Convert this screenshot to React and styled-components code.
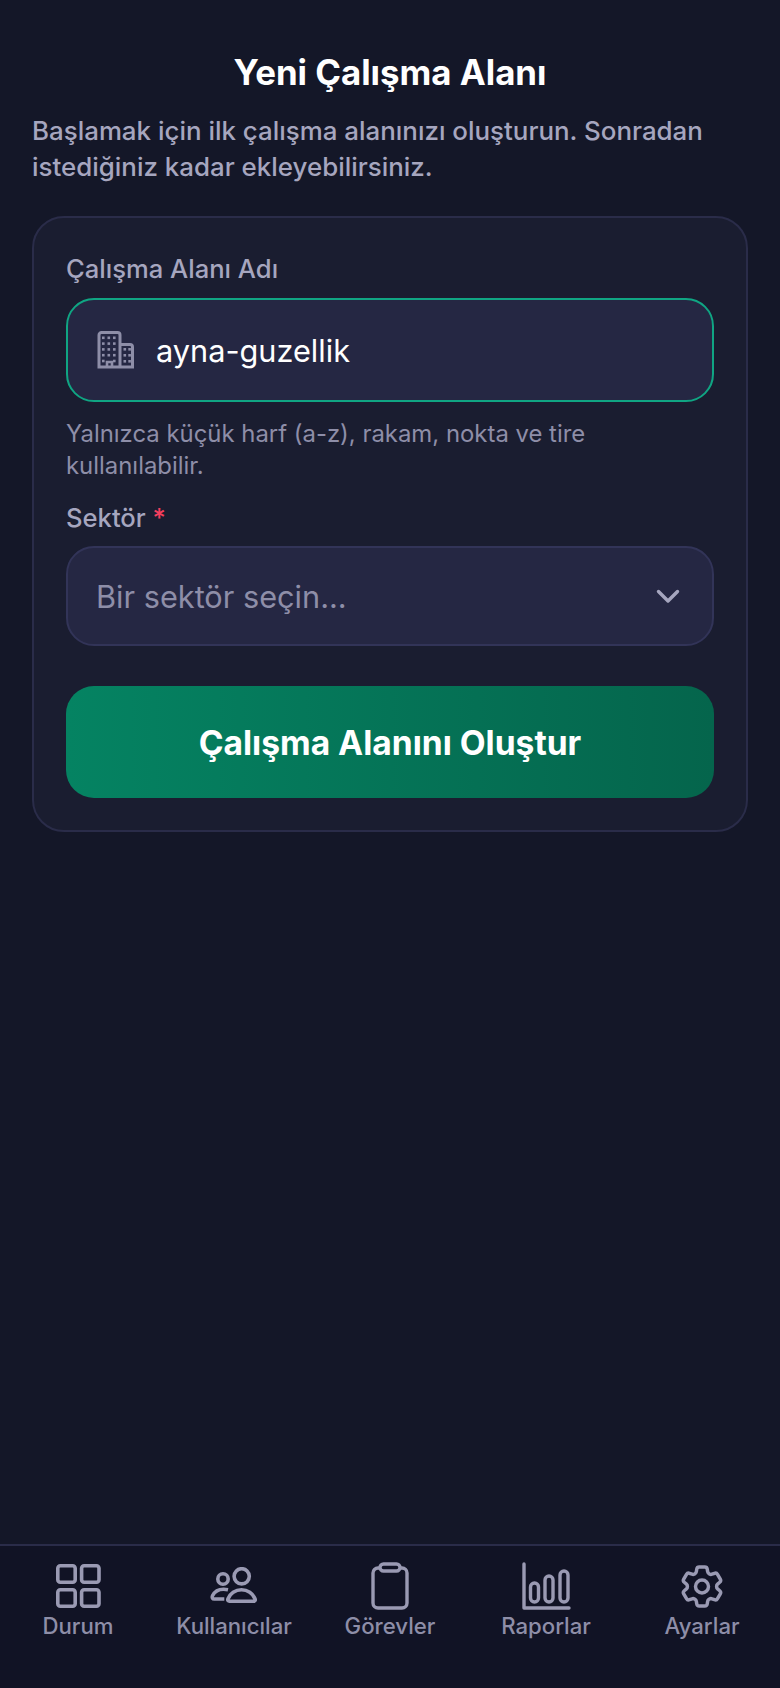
import styled, { createGlobalStyle } from "styled-components";
import { HiOutlineCog6Tooth } from "react-icons/hi2";

const GlobalStyle = createGlobalStyle`
	html, body {
		margin: 0;
		padding: 0;
		background: #141728;
	}
	* {
		box-sizing: border-box;
	}
`;

const Page = styled.div`
	width: 780px;
	height: 1688px;
	display: flex;
	flex-direction: column;
	background: #141728;
	font-family: Inter, "Noto Sans", sans-serif;
`;
const Main = styled.main`
	flex: 1;
	padding: 50px 32px 0;
`;
const Title = styled.h1`
	margin: 0 0 19px;
	font-size: 34.8px;
	line-height: 44px;
	font-weight: 700;
	color: #fff;
	text-align: center;
`;
const Intro = styled.p`
	margin: 0 0 31px;
	font-size: 25.9px;
	line-height: 36px;
	font-weight: 500;
	color: #a6a6bf;
`;
const Card = styled.form`
	height: 616px;
	padding: 33px 32px 0;
	background: #1a1d30;
	border: 2px solid #2a2c49;
	border-radius: 32px;
`;
const Label = styled.label`
	display: block;
	font-size: 25.6px;
	line-height: 36px;
	font-weight: 500;
	color: #a6a6bf;
`;
const SectorLabel = styled(Label)`
	margin-top: 18px;
`;
const Required = styled.span`
	color: #f43f5e;
`;
const InputBox = styled.div`
	height: 104px;
	margin-top: 11px;
	display: flex;
	align-items: center;
	gap: 22px;
	padding: 0 29px;
	background: #252743;
	border: 2px solid #10a583;
	border-radius: 28px;
`;
const InputValue = styled.span`
	font-size: 30.7px;
	color: #fff;
`;
const Hint = styled.p`
	margin: 16px 0 0;
	font-size: 23.9px;
	line-height: 32px;
	color: #8e8ea8;
`;
const SelectBox = styled.div`
	height: 100px;
	margin-top: 10px;
	display: flex;
	align-items: center;
	justify-content: space-between;
	padding: 0 32px 0 28px;
	background: #252743;
	border: 2px solid #323458;
	border-radius: 28px;
`;
const Placeholder = styled.span`
	font-size: 30.7px;
	color: #8e8ea8;
`;
const SubmitButton = styled.button`
	display: block;
	width: 100%;
	height: 112px;
	margin-top: 40px;
	border: none;
	border-radius: 28px;
	background: linear-gradient(90deg, #058362, #05654c);
	color: #fff;
	font-family: inherit;
	font-size: 33.6px;
	font-weight: 700;
`;
const BottomNav = styled.nav`
	height: 144px;
	padding-top: 16px;
	display: grid;
	grid-template-columns: repeat(5, 156px);
	background: #111325;
	border-top: 2px solid #2a2c49;
`;
const NavItem = styled.a`
	display: flex;
	flex-direction: column;
	align-items: center;
	gap: 2px;
	font-size: 22.2px;
	line-height: 28px;
	font-weight: 500;
	color: #8e8ea8;
`;
const NavIcon = styled.span`
	width: 52px;
	height: 48px;
	display: flex;
	align-items: center;
	justify-content: center;
	color: #9a9ab3;
`;
const BuildingSlot = styled.span`
	display: flex;
	color: #8e8ea8;
`;
const ChevronSlot = styled.span`
	display: flex;
	color: #a6a6bf;
`;

const DashboardIcon = () => (
	<svg width="45" height="44" viewBox="0 0 45 44" fill="none" stroke="currentColor" strokeWidth="3.6">
		<rect x="1.8" y="1.8" width="17.4" height="16.4" rx="2.5" />
		<rect x="25.6" y="1.8" width="17.4" height="16.4" rx="2.5" />
		<rect x="1.8" y="25.8" width="17.4" height="16.4" rx="2.5" />
		<rect x="25.6" y="25.8" width="17.4" height="16.4" rx="2.5" />
	</svg>
);
const UsersIcon = () => (
	<svg width="50" height="38" viewBox="0 0 50 38" fill="none" stroke="currentColor" strokeWidth="3.6">
		<circle cx="14" cy="12" r="5.2" />
		<circle cx="32.7" cy="9.3" r="7.6" />
		<path d="M19 22.8c-1.5-.3-3-.5-4.500-.5-4.500 0-9 2.500-11 6.500-.8 1.700 0 3.200 1.800 3.200h10" />
		<path d="M20.500 34.200c-1.500 0-2-1-1.600-2.200C21 26.500 26.500 22.800 32.500 22.800s11.500 3.700 13.600 9.200c.4 1.200-.1 2.200-1.600 2.200Z" />
	</svg>
);
const ClipboardIcon = () => (
	<svg width="38" height="48" viewBox="0 0 38 48" fill="none" stroke="currentColor" strokeWidth="3.4">
		<path d="M9 6H7a5 5 0 0 0-5 5v30a5 5 0 0 0 5 5h24a5 5 0 0 0 5-5V11a5 5 0 0 0-5-5h-2" />
		<rect x="9" y="2" width="20" height="7" rx="3.500" />
	</svg>
);
const ChartIcon = () => (
	<svg width="50" height="48" viewBox="0 0 50 48" fill="none" stroke="currentColor" strokeWidth="3.4">
		<path d="M3 2v44h45" strokeLinecap="round" strokeLinejoin="round" />
		<rect x="9.500" y="21" width="8" height="19" rx="4" />
		<rect x="24" y="14" width="8" height="26" rx="4" />
		<rect x="39" y="9" width="8" height="31" rx="4" />
	</svg>
);
const BuildingIcon = () => {
	const dots = [];
	for (let row = 0; row < 5; row++) {
		for (let col = 0; col < 3; col++) {
			if (row === 4 && col === 1) continue;
			dots.push(<rect key={`a${row}${col}`} x={5 + col * 5.5} y={5.5 + row * 5.8} width="2.6" height="2.6" />);
		}
	}
	for (let row = 0; row < 3; row++) {
		for (let col = 0; col < 2; col++) {
			dots.push(<rect key={`b${row}${col}`} x={26.5 + col * 4.8} y={17 + row * 6} width="2.6" height="2.6" />);
		}
	}
	return (
		<svg width="37" height="38" viewBox="0 0 37 38" fill="currentColor">
			<path
				d="M23 36V4a2.500 2.500 0 0 0-2.500-2.500h-16A2.500 2.500 0 0 0 2 4v32h33.500V16a2.500 2.500 0 0 0-2.500-2.500H23"
				fill="none"
				stroke="currentColor"
				strokeWidth="3"
			/>
			<path d="M10 36v-5h5v5" fill="none" stroke="currentColor" strokeWidth="2.600" />
			{dots}
		</svg>
	);
};
const ChevronIcon = () => (
	<svg width="24" height="15" viewBox="0 0 24 15" fill="none" stroke="currentColor" strokeWidth="3.4" strokeLinecap="round" strokeLinejoin="round">
		<path d="M2.500 2.500 12 12l9.500-9.500" />
	</svg>
);

const navItems = [
	{ label: "Durum", icon: <DashboardIcon /> },
	{ label: "Kullanıcılar", icon: <UsersIcon /> },
	{ label: "Görevler", icon: <ClipboardIcon /> },
	{ label: "Raporlar", icon: <ChartIcon /> },
	{ label: "Ayarlar", icon: <HiOutlineCog6Tooth size={53} strokeWidth={1.6} /> },
];

function App() {
	return (
		<>
			<GlobalStyle />
			<Page>
				<Main>
					<Title>Yeni Çalışma Alanı</Title>
					<Intro>Başlamak için ilk çalışma alanınızı oluşturun. Sonradan istediğiniz kadar ekleyebilirsiniz.</Intro>
					<Card onSubmit={e => e.preventDefault()}>
						<Label>Çalışma Alanı Adı</Label>
						<InputBox>
							<BuildingSlot>
								<BuildingIcon />
							</BuildingSlot>
							<InputValue>ayna-guzellik</InputValue>
						</InputBox>
						<Hint>Yalnızca küçük harf (a-z), rakam, nokta ve tire kullanılabilir.</Hint>
						<SectorLabel>
							Sektör <Required>*</Required>
						</SectorLabel>
						<SelectBox>
							<Placeholder>Bir sektör seçin...</Placeholder>
							<ChevronSlot>
								<ChevronIcon />
							</ChevronSlot>
						</SelectBox>
						<SubmitButton type="submit">Çalışma Alanını Oluştur</SubmitButton>
					</Card>
				</Main>
				<BottomNav>
					{navItems.map(item => (
						<NavItem key={item.label}>
							<NavIcon>{item.icon}</NavIcon>
							{item.label}
						</NavItem>
					))}
				</BottomNav>
			</Page>
		</>
	);
}

export default App;
